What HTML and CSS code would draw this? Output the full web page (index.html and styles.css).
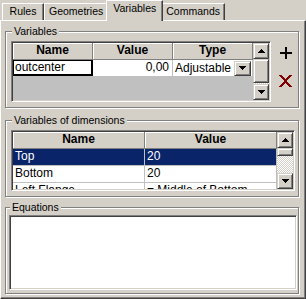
FILE: index.html
```html
<!DOCTYPE html>
<html>
<head>
    <title>Variables</title>
    <link rel="stylesheet" href="styles.css">
</head>
<body>
    <div class="tabs">
        <div class="tab">Rules</div>
        <div class="tab">Geometries</div>
        <div class="tab active">Variables</div>
        <div class="tab">Commands</div>
    </div>

    <div class="panel">
        <fieldset class="group">
            <legend>Variables</legend>
            <div class="group-row">
                <div class="grid vars-grid">
                    <div class="grid-body">
                        <div class="row head">
                            <div class="cell">Name</div>
                            <div class="cell">Value</div>
                            <div class="cell">Type</div>
                        </div>
                        <div class="row">
                            <div class="cell edit">outcenter</div>
                            <div class="cell num">0,00</div>
                            <div class="cell combo">
                                Adjustable
                                <span class="raised drop-btn">
                                    <svg width="7" height="4" viewBox="0 0 7 4"><path d="M0 0h7v1H6v1H5v1H4v1H3V3H2V2H1V1H0z"/></svg>
                                </span>
                            </div>
                        </div>
                    </div>
                    <div class="scrollbar">
                        <div class="sb-btn">
                            <svg width="7" height="4" viewBox="0 0 7 4"><path d="M3 0h1v1h1v1h1v1h1v1H0V3h1V2h1V1h1z"/></svg>
                        </div>
                        <div class="sb-btn sb-thumb"></div>
                        <div class="sb-track"></div>
                        <div class="sb-btn">
                            <svg width="7" height="4" viewBox="0 0 7 4"><path d="M0 0h7v1H6v1H5v1H4v1H3V3H2V2H1V1H0z"/></svg>
                        </div>
                    </div>
                </div>
                <div class="actions">
                    <svg width="12" height="12" viewBox="0 0 12 12"><path d="M0 5h12v2H0zM5 0h2v12H5z"/></svg>
                    <svg width="13" height="14" viewBox="0 0 13 14"><path d="M1 1L12 13M12 1L1 13" stroke="#800000" stroke-width="2" shape-rendering="crispEdges"/></svg>
                </div>
            </div>
        </fieldset>

        <fieldset class="group dims">
            <legend>Variables of dimensions</legend>
            <div class="grid dims-grid">
                <div class="grid-body">
                    <div class="row head">
                        <div class="cell">Name</div>
                        <div class="cell">Value</div>
                    </div>
                    <div class="row selected">
                        <div class="cell">Top</div>
                        <div class="cell">20</div>
                    </div>
                    <div class="row">
                        <div class="cell">Bottom</div>
                        <div class="cell">20</div>
                    </div>
                    <div class="row">
                        <div class="cell">Left Flange</div>
                        <div class="cell">= Middle of Bottom</div>
                    </div>
                </div>
                <div class="scrollbar">
                    <div class="sb-btn">
                        <svg width="7" height="4" viewBox="0 0 7 4"><path d="M3 0h1v1h1v1h1v1h1v1H0V3h1V2h1V1h1z"/></svg>
                    </div>
                    <div class="sb-btn sb-thumb"></div>
                    <div class="sb-track"></div>
                    <div class="sb-btn">
                        <svg width="7" height="4" viewBox="0 0 7 4"><path d="M0 0h7v1H6v1H5v1H4v1H3V3H2V2H1V1H0z"/></svg>
                    </div>
                </div>
            </div>
        </fieldset>

        <fieldset class="group equations">
            <legend>Equations</legend>
            <div class="memo"></div>
        </fieldset>
    </div>
</body>
</html>
```

FILE: styles.css
```css
body {
    margin: 0;
    width: 306px;
    height: 299px;
    overflow: hidden;
    background-color: #d4d0c8;
    font-family: "Liberation Sans", Arial, sans-serif;
    font-size: 10.5px;
    color: #000;
}

/* tab strip */
.tabs {
    display: flex;
    align-items: flex-end;
    height: 20px;
    padding-left: 2px;
}

.tab {
    box-sizing: border-box;
    min-width: 42px;
    height: 17px;
    padding: 0 4px;
    line-height: 15px;
    text-align: center;
    white-space: nowrap;
    border: 1px solid #fff;
    border-right-color: #404040;
    border-bottom: none;
    box-shadow: inset -1px 0 #808080;
}

.tab.active {
    position: relative;
    height: 21px;
    margin: 0 -2px -1px;
    padding: 0 6px 5px;
    background-color: #d4d0c8;
}

.panel {
    box-sizing: border-box;
    display: flex;
    flex-direction: column;
    height: 279px;
    padding: 4px 6px 4px 4px;
    border: 1px solid #404040;
    border-top-color: #fff;
    border-left-color: #fff;
    box-shadow: inset -1px -1px #808080;
}

/* group boxes */
.group {
    margin: 0;
    padding: 4px 3px 5px 5px;
    min-width: 0;
    border: 1px solid #808080;
    box-shadow: inset 1px 1px #fff, 1px 1px #fff;
}

.group legend {
    margin-left: 1px;
    padding: 0 2px;
    line-height: 12px;
    background-color: #d4d0c8;
}

.dims {
    margin-top: 6px;
}

.equations {
    flex: 1;
    display: flex;
    flex-direction: column;
    margin-top: 4px;
    padding: 2px 1px 3px 3px;
}

.group-row {
    display: flex;
    align-items: flex-start;
}

.actions {
    display: flex;
    flex-direction: column;
    align-items: center;
    gap: 15px;
    margin-left: 8px;
    padding-top: 6px;
}

/* string grids */
.grid {
    box-sizing: border-box;
    display: flex;
    height: 61px;
    padding: 1px;
    border: 1px solid #fff;
    border-top-color: #808080;
    border-left-color: #808080;
    box-shadow: inset 1px 1px #404040, inset -1px -1px #d4d0c8;
}

.vars-grid {
    width: 260px;
}

.dims-grid {
    width: 284px;
}

.grid-body {
    flex: 1;
    overflow: hidden;
    font-size: 12px;
}

.vars-grid .grid-body {
    background-color: #c0c0c0;
}

.dims-grid .grid-body {
    background-color: #fff;
}

.row {
    box-sizing: border-box;
    display: flex;
    height: 17px;
    border-bottom: 1px solid #c0c0c0;
}

.cell {
    box-sizing: border-box;
    height: 100%;
    padding: 0 2px;
    line-height: 15px;
    white-space: nowrap;
    overflow: hidden;
    background-color: #fff;
    border-right: 1px solid #c0c0c0;
}

.vars-grid .cell {
    width: 80px;
}

.dims-grid .cell {
    width: 132px;
}

.row.head {
    border-bottom-color: #808080;
}

.head .cell {
    font-weight: bold;
    text-align: center;
    background-color: #d4d0c8;
    border-right-color: #808080;
    box-shadow: inset 1px 1px #fff;
}

.row.selected .cell {
    background-color: #0a246a;
    color: #fff;
}

.cell.edit {
    padding-left: 1px;
    line-height: 13px;
    border: 1px solid #000;
    border-right-width: 2px;
    border-bottom-width: 2px;
}

.cell.num {
    text-align: right;
    padding-right: 3px;
}

.cell.combo {
    display: flex;
    align-items: center;
    justify-content: space-between;
    padding: 0 1px 0 2px;
}

/* raised 3d bits */
.raised,
.sb-btn {
    box-sizing: border-box;
    display: flex;
    align-items: center;
    justify-content: center;
    background-color: #d4d0c8;
    border: 1px solid #404040;
    border-top-color: #d4d0c8;
    border-left-color: #d4d0c8;
    box-shadow: inset 1px 1px #fff, inset -1px -1px #808080;
}

.drop-btn {
    width: 17px;
    height: 15px;
}

.scrollbar {
    display: flex;
    flex-direction: column;
    width: 16px;
}

.sb-btn {
    height: 16px;
    flex-shrink: 0;
}

.vars-grid .sb-thumb {
    flex: 1;
    height: auto;
}

.vars-grid .sb-track {
    height: 1px;
}

.dims-grid .sb-thumb {
    height: 8px;
}

.dims-grid .sb-track {
    flex: 1;
}

.sb-track {
    background: repeating-conic-gradient(#fff 0 25%, #d4d0c8 0 50%) 0 0 / 2px 2px;
}

.memo {
    flex: 1;
    background-color: #fff;
    border: 1px solid #fff;
    border-top-color: #808080;
    border-left-color: #808080;
    box-shadow: inset 1px 1px #404040, inset -1px -1px #d4d0c8;
}
```
